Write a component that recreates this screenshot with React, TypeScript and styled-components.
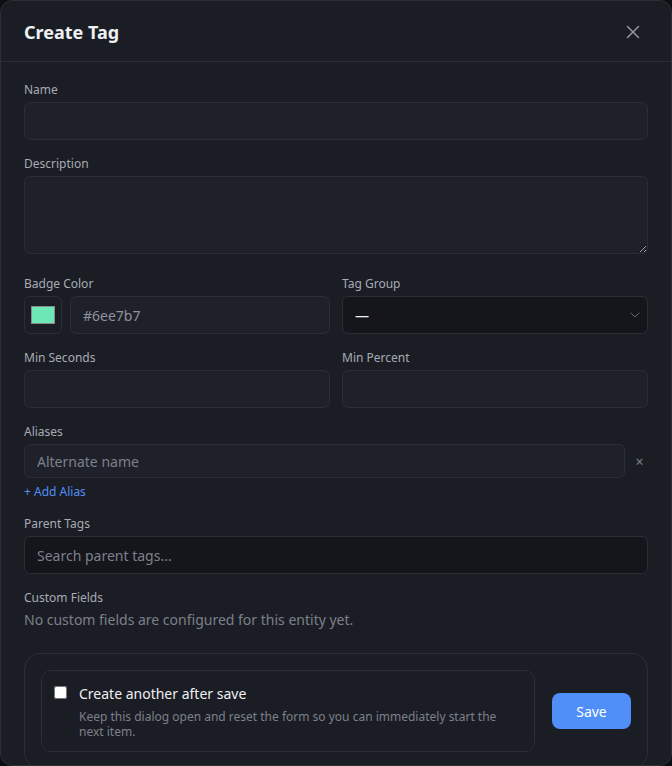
import React from 'react'
import styled, { createGlobalStyle } from 'styled-components'
import { X, ChevronDown } from 'lucide-react'

const colors = {
  page: '#0d0e12',
  dialog: '#1b1d24',
  input: '#1f212a',
  inputDark: '#15161b',
  border: '#2b2e37',
  label: '#a7abb5',
  text: '#eef0f3',
  muted: '#7c808b',
  blue: '#4f8ff7',
}

const GlobalStyle = createGlobalStyle`
  html, body {
    margin: 0;
    padding: 0;
    background: ${colors.page};
    font-family: "Noto Sans", "Open Sans", sans-serif;
    color: ${colors.text};
  }
  * {
    box-sizing: border-box;
  }
`

const Dialog = styled.div`
  width: 672px;
  height: 766px;
  overflow: hidden;
  background: ${colors.dialog};
  border: 1px solid ${colors.border};
  border-radius: 12px;
  display: flex;
  flex-direction: column;
`

const Header = styled.header`
  height: 61px;
  flex-shrink: 0;
  display: flex;
  align-items: center;
  justify-content: space-between;
  padding: 1px 23px 0 23px;
  border-bottom: 1px solid ${colors.border};

  h2 {
    margin: 0;
    font-size: 18px;
    font-weight: 700;
    color: ${colors.text};
  }
`

const CloseButton = styled.button`
  background: none;
  border: 0;
  padding: 0;
  width: 30px;
  height: 30px;
  color: #9a9ea8;
  display: flex;
  align-items: center;
  justify-content: center;
  cursor: pointer;
`

const Body = styled.div`
  padding: 19px 23px 0;
  display: flex;
  flex-direction: column;
  gap: 15px;
`

const Field = styled.div`
  display: flex;
  flex-direction: column;
  min-width: 0;
`

const Label = styled.label`
  font-size: 12px;
  line-height: 17px;
  color: ${colors.label};
  margin-bottom: 4px;
`

const TwoCols = styled.div`
  display: grid;
  grid-template-columns: 1fr 1fr;
  gap: 12px;
`

const Input = styled.input<{ $dark?: boolean; $h?: number }>`
  width: 100%;
  height: ${(p) => p.$h ?? 38}px;
  background: ${(p) => (p.$dark ? colors.inputDark : colors.input)};
  border: 1px solid ${colors.border};
  border-radius: 6px;
  padding: 0 12px;
  font-family: inherit;
  font-size: 14px;
  color: ${colors.text};
  outline: none;

  &::placeholder {
    color: ${colors.muted};
  }
`

const TextArea = styled.textarea`
  display: block;
  width: 100%;
  height: 78px;
  margin-bottom: 6px;
  background: ${colors.input};
  border: 1px solid ${colors.border};
  border-radius: 6px;
  padding: 8px 12px;
  font-family: inherit;
  font-size: 14px;
  color: ${colors.text};
  resize: vertical;
  outline: none;
`

const ColorRow = styled.div`
  display: flex;
  gap: 8px;
`

const SwatchBox = styled.div`
  width: 38px;
  height: 38px;
  flex-shrink: 0;
  background: ${colors.dialog};
  border: 1px solid ${colors.border};
  border-radius: 6px;
  display: flex;
  align-items: center;
  justify-content: center;
`

const Swatch = styled.span<{ $color: string }>`
  width: 24px;
  height: 18px;
  background: ${(p) => p.$color};
  border: 1px solid #8a8a8a;
`

const HexInput = styled(Input)`
  color: #8f939d;
`

const SelectBox = styled.div`
  position: relative;
  height: 38px;
  background: ${colors.inputDark};
  border: 1px solid ${colors.border};
  border-radius: 6px;
  display: flex;
  align-items: center;
  padding: 0 12px;
  font-size: 14px;
  color: ${colors.text};

  svg {
    position: absolute;
    right: 4px;
    top: 50%;
    transform: translateY(-50%);
    color: #666a76;
  }
`

const AliasRow = styled.div`
  display: flex;
  align-items: center;
  gap: 6px;
`

const RemoveButton = styled.button`
  width: 17px;
  flex-shrink: 0;
  background: none;
  border: 0;
  padding: 0;
  color: #7d818b;
  font-family: inherit;
  font-size: 14px;
  cursor: pointer;
`

const AddLink = styled.a`
  margin-top: 6px;
  font-size: 12px;
  line-height: 16px;
  color: ${colors.blue};
  text-decoration: none;
  cursor: pointer;
`

const EmptyText = styled.p`
  margin: 0;
  font-size: 14px;
  line-height: 20px;
  color: ${colors.muted};
`

const Footer = styled.div`
  margin-top: 8px;
  border: 1px solid ${colors.border};
  border-radius: 16px;
  padding: 16px;
  display: flex;
  align-items: center;
  gap: 17px;
`

const OptionCard = styled.label`
  flex: 1;
  display: flex;
  gap: 12px;
  align-items: flex-start;
  padding: 13px 12px 12px;
  border: 1px solid ${colors.border};
  border-radius: 10px;

  input {
    margin: 2px 0 0 0;
    width: 13px;
    height: 13px;
  }
`

const OptionText = styled.div`
  display: flex;
  flex-direction: column;
  gap: 5px;

  strong {
    font-size: 14px;
    line-height: 20px;
    font-weight: 400;
    color: ${colors.text};
  }

  span {
    font-size: 12px;
    line-height: 15px;
    color: ${colors.muted};
  }
`

const SaveButton = styled.button`
  width: 79px;
  height: 36px;
  flex-shrink: 0;
  border: 0;
  border-radius: 8px;
  background: ${colors.blue};
  color: #fff;
  font-family: inherit;
  font-size: 14px;
  cursor: pointer;
`

const App = () => {
  return (
    <>
      <GlobalStyle />
      <Dialog>
        <Header>
          <h2>Create Tag</h2>
          <CloseButton aria-label="Close">
            <X size={22} strokeWidth={1.5} />
          </CloseButton>
        </Header>
        <Body>
          <Field>
            <Label>Name</Label>
            <Input />
          </Field>
          <Field>
            <Label>Description</Label>
            <TextArea />
          </Field>
          <TwoCols>
            <Field>
              <Label>Badge Color</Label>
              <ColorRow>
                <SwatchBox>
                  <Swatch $color="#6ee7b7" />
                </SwatchBox>
                <HexInput defaultValue="#6ee7b7" />
              </ColorRow>
            </Field>
            <Field>
              <Label>Tag Group</Label>
              <SelectBox>
                —
                <ChevronDown size={16} strokeWidth={1.5} />
              </SelectBox>
            </Field>
          </TwoCols>
          <TwoCols>
            <Field>
              <Label>Min Seconds</Label>
              <Input />
            </Field>
            <Field>
              <Label>Min Percent</Label>
              <Input />
            </Field>
          </TwoCols>
          <Field>
            <Label>Aliases</Label>
            <AliasRow>
              <Input $h={34} placeholder="Alternate name" />
              <RemoveButton>×</RemoveButton>
            </AliasRow>
            <AddLink>+ Add Alias</AddLink>
          </Field>
          <Field>
            <Label>Parent Tags</Label>
            <Input $dark placeholder="Search parent tags..." />
          </Field>
          <Field>
            <Label>Custom Fields</Label>
            <EmptyText>No custom fields are configured for this entity yet.</EmptyText>
          </Field>
          <Footer>
            <OptionCard>
              <input type="checkbox" />
              <OptionText>
                <strong>Create another after save</strong>
                <span>
                  Keep this dialog open and reset the form so you can immediately start the
                  next item.
                </span>
              </OptionText>
            </OptionCard>
            <SaveButton>Save</SaveButton>
          </Footer>
        </Body>
      </Dialog>
    </>
  )
}

export default App
